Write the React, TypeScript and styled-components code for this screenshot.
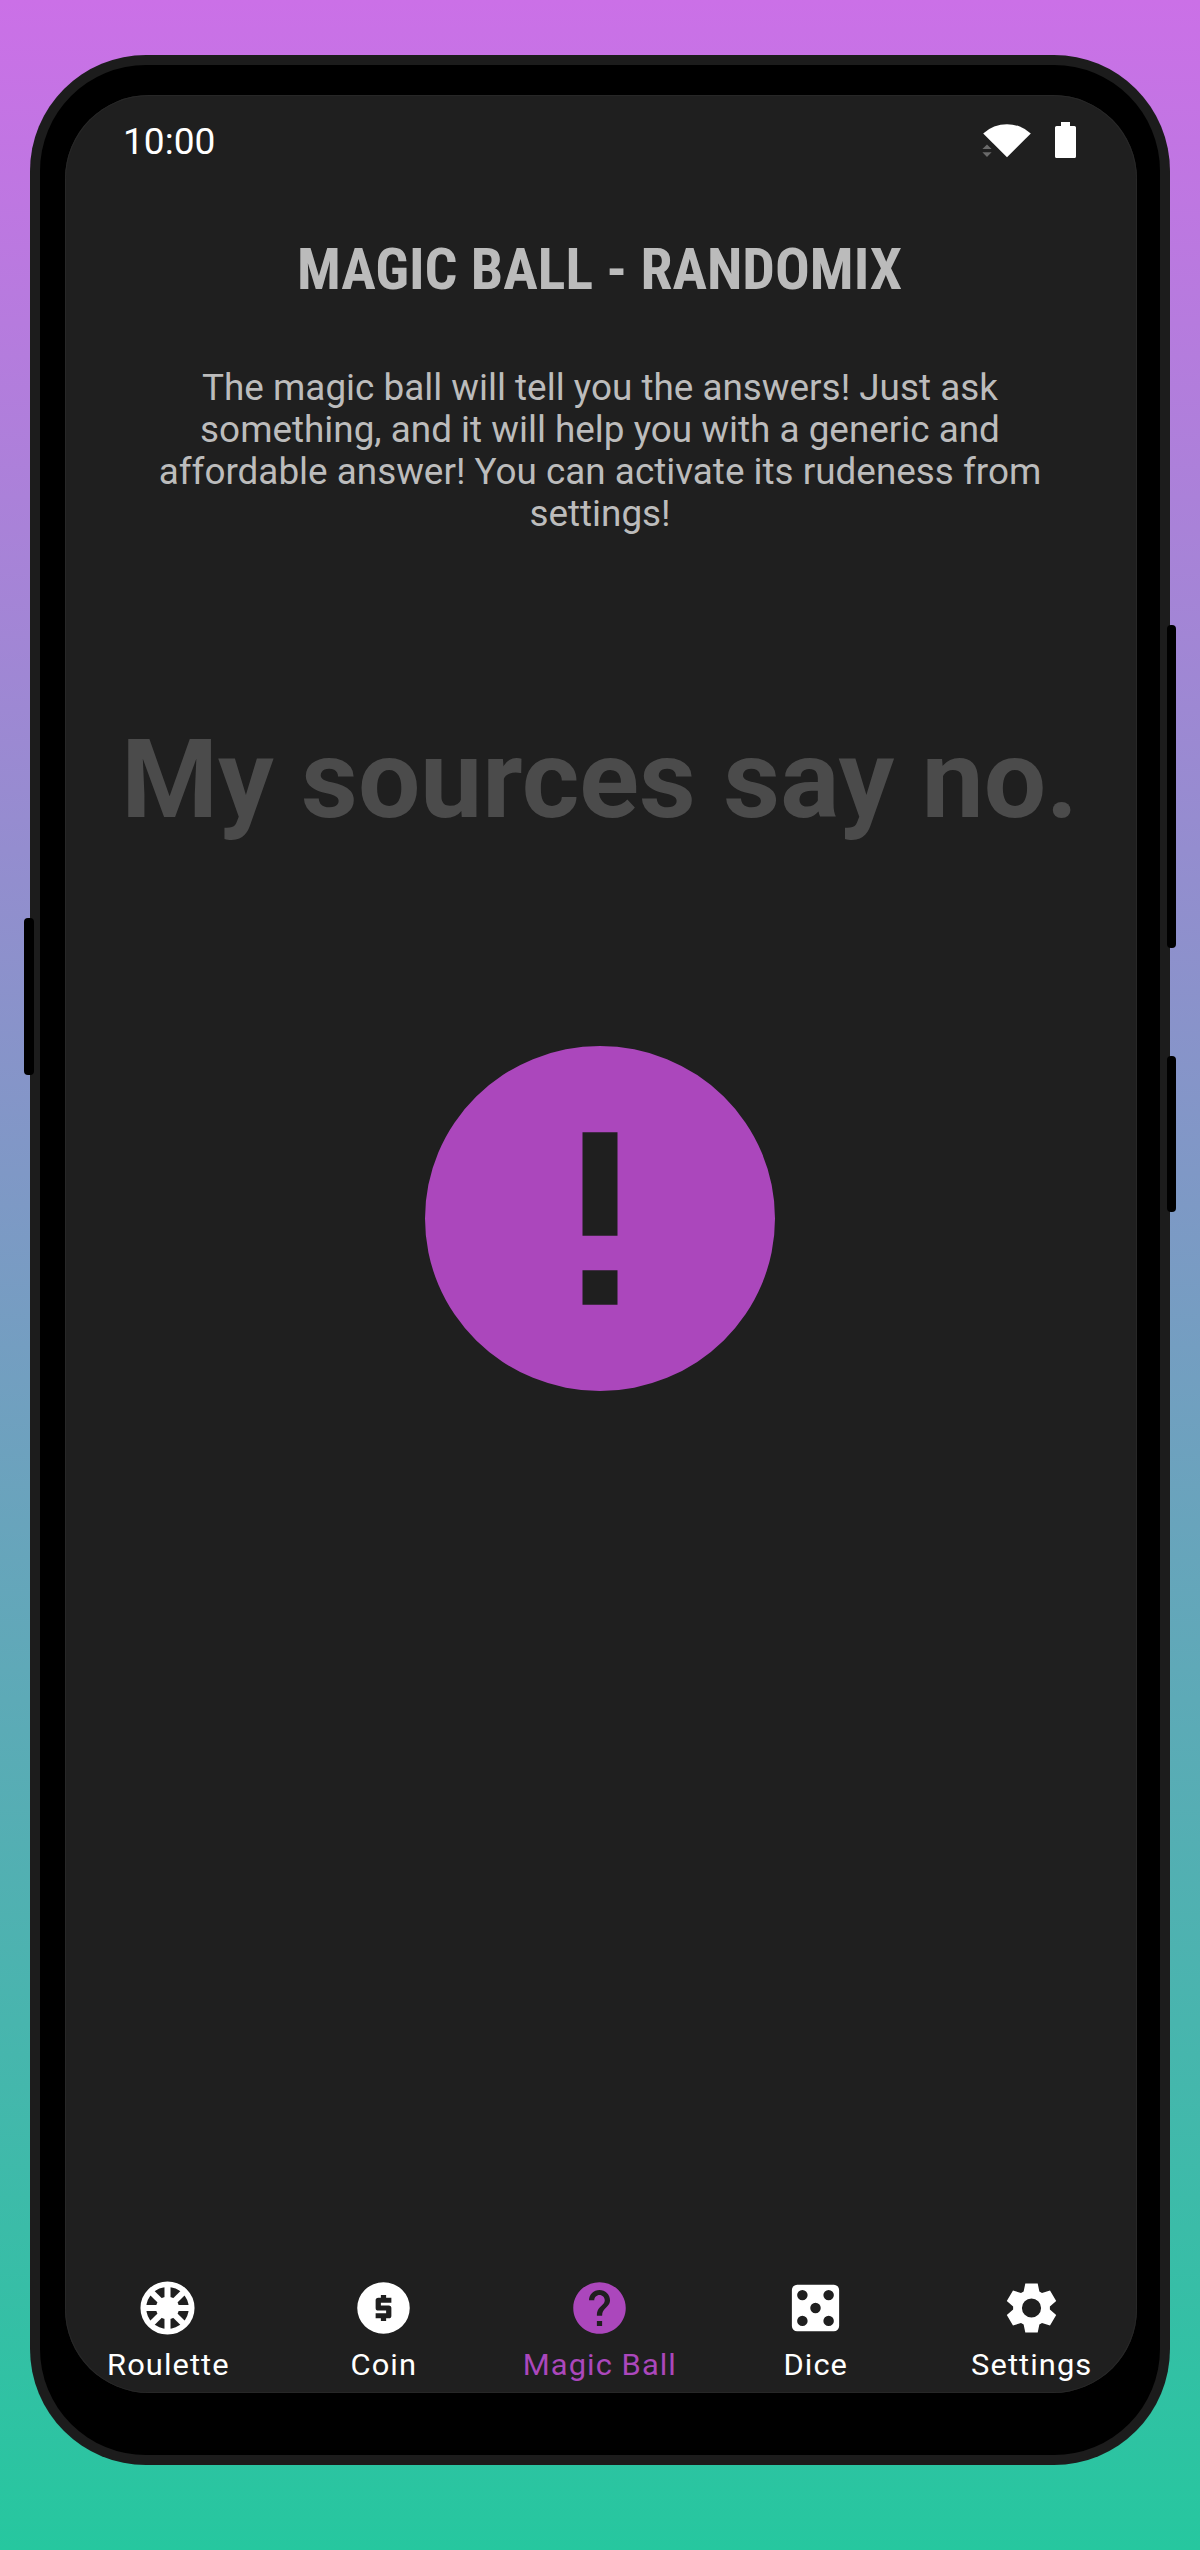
import React from "react";
import styled, { createGlobalStyle } from "styled-components";

const GlobalStyle = createGlobalStyle`
  body {
    margin: 0;
    font-family: Roboto, "Liberation Sans", sans-serif;
  }
`;

const STRETCH = 1.0155;

const Page = styled.main`
  box-sizing: border-box;
  width: 1200px;
  height: 2550px;
  padding: 55px 30px 0;
  background: linear-gradient(180deg, #cb70e7 0%, #26c79f 100%);
`;

const Phone = styled.div`
  position: relative;
  box-sizing: border-box;
  width: 1140px;
  height: 2410px;
  padding: 10px;
  border-radius: 116px;
  background: #1c1c1c;
`;

const Bezel = styled.div`
  box-sizing: border-box;
  width: 100%;
  height: 100%;
  padding: 30px 23px 62px 25px;
  border-radius: 106px;
  background: #000;
`;

const SideButton = styled.span<{ $side: "left" | "right"; $top: number; $length: number }>`
  position: absolute;
  ${(p) => p.$side}: -6px;
  top: ${(p) => p.$top}px;
  width: 9.5px;
  height: ${(p) => p.$length}px;
  border-radius: 4px;
  background: #000;
`;

const Screen = styled.div`
  display: flex;
  flex-direction: column;
  box-sizing: border-box;
  width: 100%;
  height: 100%;
  padding-right: 2px;
  overflow: hidden;
  border-radius: 84px;
  background: #1f1f1f;
  box-shadow: inset 0 0 0 1px #272727;
`;

const StatusBar = styled.header`
  display: flex;
  align-items: center;
  justify-content: space-between;
  box-sizing: border-box;
  height: 90px;
  padding: 0 59px 0 58px;
  color: #fff;
`;

const Clock = styled.time`
  padding-top: 4px;
  font-size: 36.5px;
  line-height: 44px;
  transform: scaleX(${STRETCH});
  transform-origin: left;
`;

const StatusIcons = styled.div`
  display: flex;
  gap: 24px;

  svg {
    display: block;
  }
`;

const Content = styled.section`
  display: flex;
  flex: 1;
  flex-direction: column;
  align-items: center;
  text-align: center;
`;

const Title = styled.h1`
  margin: 52px 0 0;
  color: #bbb;
  font: 700 57px/66px "Roboto Condensed", Roboto, sans-serif;
  white-space: nowrap;
  transform: scaleX(1.0135);
`;

const Description = styled.p`
  width: 900px;
  margin: 64px 0 0;
  color: #bcbcbc;
  font-size: 36.3px;
  line-height: 42px;
  transform: scaleX(${STRETCH});
`;

const Answer = styled.p`
  margin: 181px 0 0;
  color: #4b4b4b;
  font-size: 109px;
  font-weight: 700;
  line-height: 128px;
  white-space: nowrap;
  transform: scaleX(1.0145);
`;

const BallButton = styled.button`
  display: block;
  width: 350px;
  height: 345px;
  margin: 202px 0 0;
  padding: 0;
  border: 0;
  background: none;
  color: #ab47bc;

  svg {
    display: block;
    width: 100%;
    height: 100%;
  }
`;

const TabBar = styled.nav`
  display: grid;
  grid-template-columns: repeat(5, 216px);
  margin-left: -5px;
  padding-bottom: 10px;
`;

const Tab = styled.a<{ $active?: boolean }>`
  display: flex;
  flex-direction: column;
  align-items: center;
  gap: 8px;
  color: ${(p) => (p.$active ? "#ab47bc" : "#fff")};

  svg {
    display: block;
    width: 63px;
    height: 62px;
    margin-right: 1px;
  }
`;

const TabLabel = styled.span`
  font-size: 30.4px;
  line-height: 36px;
  letter-spacing: 1.05px;
  white-space: nowrap;
  transform: scaleX(${STRETCH});
`;

const WifiIcon = () => (
  <svg width="49" height="36" viewBox="0 0 49 36" fill="currentColor">
    <path d="M25 35.2 L1.2 11.5 A35 35 0 0 1 48.8 11.5 Z" />
    <path d="M5 22.4 L9.6 27 H.4 Z M5 35 L.4 30.2 H9.6 Z" fill="#6a6a6a" />
  </svg>
);

const BatteryIcon = () => (
  <svg width="21" height="36" viewBox="0 0 21 36" fill="currentColor">
    <path d="M6 0 H15 V4 H19.4 A1.6 1.6 0 0 1 21 5.6 V34.4 A1.6 1.6 0 0 1 19.4 36 H1.6 A1.6 1.6 0 0 1 0 34.4 V5.6 A1.6 1.6 0 0 1 1.6 4 H6 Z" />
  </svg>
);

const BallIcon = () => (
  <svg viewBox="2 2 20 20" preserveAspectRatio="none" fill="currentColor" fillRule="evenodd">
    <path d="M12 2a10 10 0 1 0 0 20a10 10 0 1 0 0-20Z M11 7h2v6h-2Z M11 15h2v2h-2Z" />
  </svg>
);

const RouletteIcon = () => (
  <svg viewBox="0 0 24 24" preserveAspectRatio="none" stroke="currentColor">
    <circle cx="12" cy="12" r="9.2" fill="none" strokeWidth="2.2" />
    <circle cx="12" cy="12" r="4.4" fill="currentColor" stroke="none" />
    {[0, 45, 90, 135].map((angle) => (
      <path key={angle} d="M12 3V21" strokeWidth="2.3" transform={`rotate(${angle} 12 12)`} />
    ))}
  </svg>
);

const CoinIcon = () => (
  <svg viewBox="0 0 24 24" preserveAspectRatio="none" fill="currentColor" fillRule="evenodd">
    <path d="M12 2A10 10 0 0 1 22 12A10 10 0 0 1 12 22A10 10 0 0 1 2 12A10 10 0 0 1 12 2M11 17V16H9V14H13V13H10A1 1 0 0 1 9 12V9A1 1 0 0 1 10 8H11V7H13V8H15V10H11V11H14A1 1 0 0 1 15 12V15A1 1 0 0 1 14 16H13V17H11Z" />
  </svg>
);

const HelpIcon = () => (
  <svg viewBox="0 0 24 24" preserveAspectRatio="none" fill="currentColor">
    <path d="M12 2C6.48 2 2 6.48 2 12s4.48 10 10 10 10-4.48 10-10S17.52 2 12 2zm1 17h-2v-2h2v2zm2.07-7.75l-.9.92C13.45 12.9 13 13.5 13 15h-2v-.5c0-1.1.45-2.1 1.17-2.83l1.24-1.26c.37-.36.59-.86.59-1.41 0-1.1-.9-2-2-2s-2 .9-2 2H8c0-2.21 1.79-4 4-4s4 1.79 4 4c0 .88-.36 1.68-.93 2.25z" />
  </svg>
);

const pip = (x: number, y: number) => `M${x - 2} ${y}a2 2 0 1 0 4 0a2 2 0 1 0-4 0Z`;

const DiceIcon = () => (
  <svg viewBox="0 0 24 24" preserveAspectRatio="none" fill="currentColor" fillRule="evenodd">
    <path
      d={`M5 3H19A2 2 0 0 1 21 5V19A2 2 0 0 1 19 21H5A2 2 0 0 1 3 19V5A2 2 0 0 1 5 3Z ${pip(7, 7)} ${pip(17, 7)} ${pip(12, 12)} ${pip(7, 17)} ${pip(17, 17)}`}
    />
  </svg>
);

// One tooth of the gear, relative to its centre; the outline repeats it every 60 degrees.
const tooth = [
  [-3, -6.35],
  [-2.36, -9.5],
  [2.36, -9.5],
  [3, -6.35],
];

const gearOutline = [0, 1, 2, 3, 4, 5]
  .flatMap((step) => {
    const angle = (step * Math.PI) / 3;
    return tooth.map(([x, y]) => {
      const px = 12 + x * Math.cos(angle) - y * Math.sin(angle);
      const py = 12 + x * Math.sin(angle) + y * Math.cos(angle);
      return `${px.toFixed(2)} ${py.toFixed(2)}`;
    });
  })
  .join("L");

const GearIcon = () => (
  <svg viewBox="0 0 24 24" preserveAspectRatio="none" fill="currentColor" fillRule="evenodd">
    <path d={`M${gearOutline}Z M8.35 12a3.65 3.65 0 1 0 7.3 0a3.65 3.65 0 1 0-7.3 0Z`} />
  </svg>
);

const tabs = [
  { label: "Roulette", Icon: RouletteIcon },
  { label: "Coin", Icon: CoinIcon },
  { label: "Magic Ball", Icon: HelpIcon, active: true },
  { label: "Dice", Icon: DiceIcon },
  { label: "Settings", Icon: GearIcon },
];

export default function App() {
  return (
    <>
      <GlobalStyle />
      <Page>
        <Phone>
          <Bezel>
            <Screen>
              <StatusBar>
                <Clock>10:00</Clock>
                <StatusIcons>
                  <WifiIcon />
                  <BatteryIcon />
                </StatusIcons>
              </StatusBar>
              <Content>
                <Title>MAGIC BALL - RANDOMIX</Title>
                <Description>
                  The magic ball will tell you the answers! Just ask something, and it will help you
                  with a generic and affordable answer! You can activate its rudeness from settings!
                </Description>
                <Answer>My sources say no.</Answer>
                <BallButton aria-label="Ask the magic ball">
                  <BallIcon />
                </BallButton>
              </Content>
              <TabBar>
                {tabs.map(({ label, Icon, active }) => (
                  <Tab key={label} $active={active}>
                    <Icon />
                    <TabLabel>{label}</TabLabel>
                  </Tab>
                ))}
              </TabBar>
            </Screen>
          </Bezel>
          <SideButton $side="left" $top={863} $length={157} />
          <SideButton $side="right" $top={569.5} $length={323} />
          <SideButton $side="right" $top={1000.5} $length={156.5} />
        </Phone>
      </Page>
    </>
  );
}
